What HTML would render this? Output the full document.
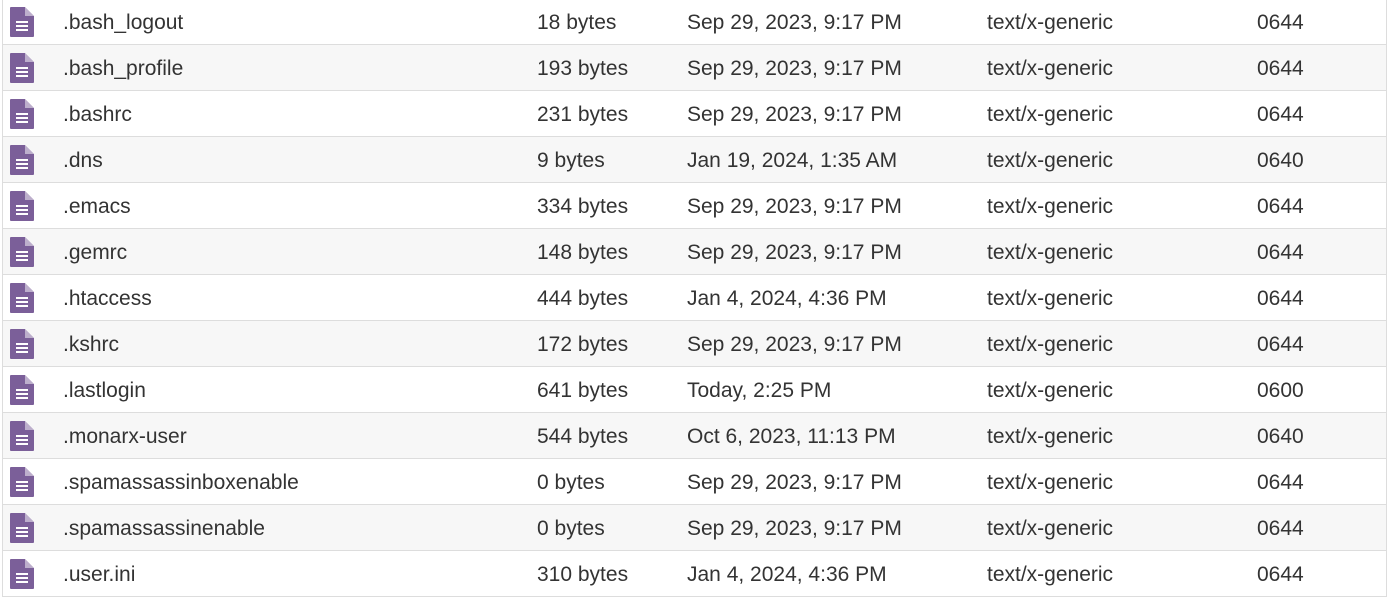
<!DOCTYPE html>
<html><head><style>
html,body{margin:0;padding:0;background:#fff;width:1387px;height:598px;overflow:hidden}
.wrap{position:absolute;left:2px;top:-1px;width:1383px;border-left:1px solid #ddd;border-right:1px solid #ddd}
.r{position:relative;height:45px;border-bottom:1px solid #ddd;font-family:"Liberation Sans",sans-serif;font-size:21px;color:#333}
.r:nth-child(even){background:#f7f7f7}
.r span{position:absolute;top:12px;white-space:nowrap}
.r svg{position:absolute;left:7px;top:8px}
</style></head><body><div class="wrap">
</div>
<script>
const d=[[".bash_logout","18 bytes","Sep 29, 2023, 9:17 PM","0644"],
[".bash_profile","193 bytes","Sep 29, 2023, 9:17 PM","0644"],
[".bashrc","231 bytes","Sep 29, 2023, 9:17 PM","0644"],
[".dns","9 bytes","Jan 19, 2024, 1:35 AM","0640"],
[".emacs","334 bytes","Sep 29, 2023, 9:17 PM","0644"],
[".gemrc","148 bytes","Sep 29, 2023, 9:17 PM","0644"],
[".htaccess","444 bytes","Jan 4, 2024, 4:36 PM","0644"],
[".kshrc","172 bytes","Sep 29, 2023, 9:17 PM","0644"],
[".lastlogin","641 bytes","Today, 2:25 PM","0600"],
[".monarx-user","544 bytes","Oct 6, 2023, 11:13 PM","0640"],
[".spamassassinboxenable","0 bytes","Sep 29, 2023, 9:17 PM","0644"],
[".spamassassinenable","0 bytes","Sep 29, 2023, 9:17 PM","0644"],
[".user.ini","310 bytes","Jan 4, 2024, 4:36 PM","0644"]];
const ic='<svg width="24" height="30" viewBox="0 0 24 30"><path d="M1 0H15L24 9V29Q24 30 23 30H1Q0 30 0 29V1Q0 0 1 0Z" fill="#7b5f99"/><path d="M15 0V9H24Z" fill="#fff" opacity=".5"/><rect x="6" y="14" width="12" height="2" fill="#fff"/><rect x="6" y="18" width="12" height="2" fill="#fff"/><rect x="6" y="22" width="12" height="2" fill="#fff"/></svg>';
document.querySelector('.wrap').innerHTML=d.map(r=>`<div class="r">${ic}<span style="left:60px">${r[0]}</span><span style="left:534px">${r[1]}</span><span style="left:684px">${r[2]}</span><span style="left:984px">text/x-generic</span><span style="left:1254px">${r[3]}</span></div>`).join('');
</script>
</body></html>
